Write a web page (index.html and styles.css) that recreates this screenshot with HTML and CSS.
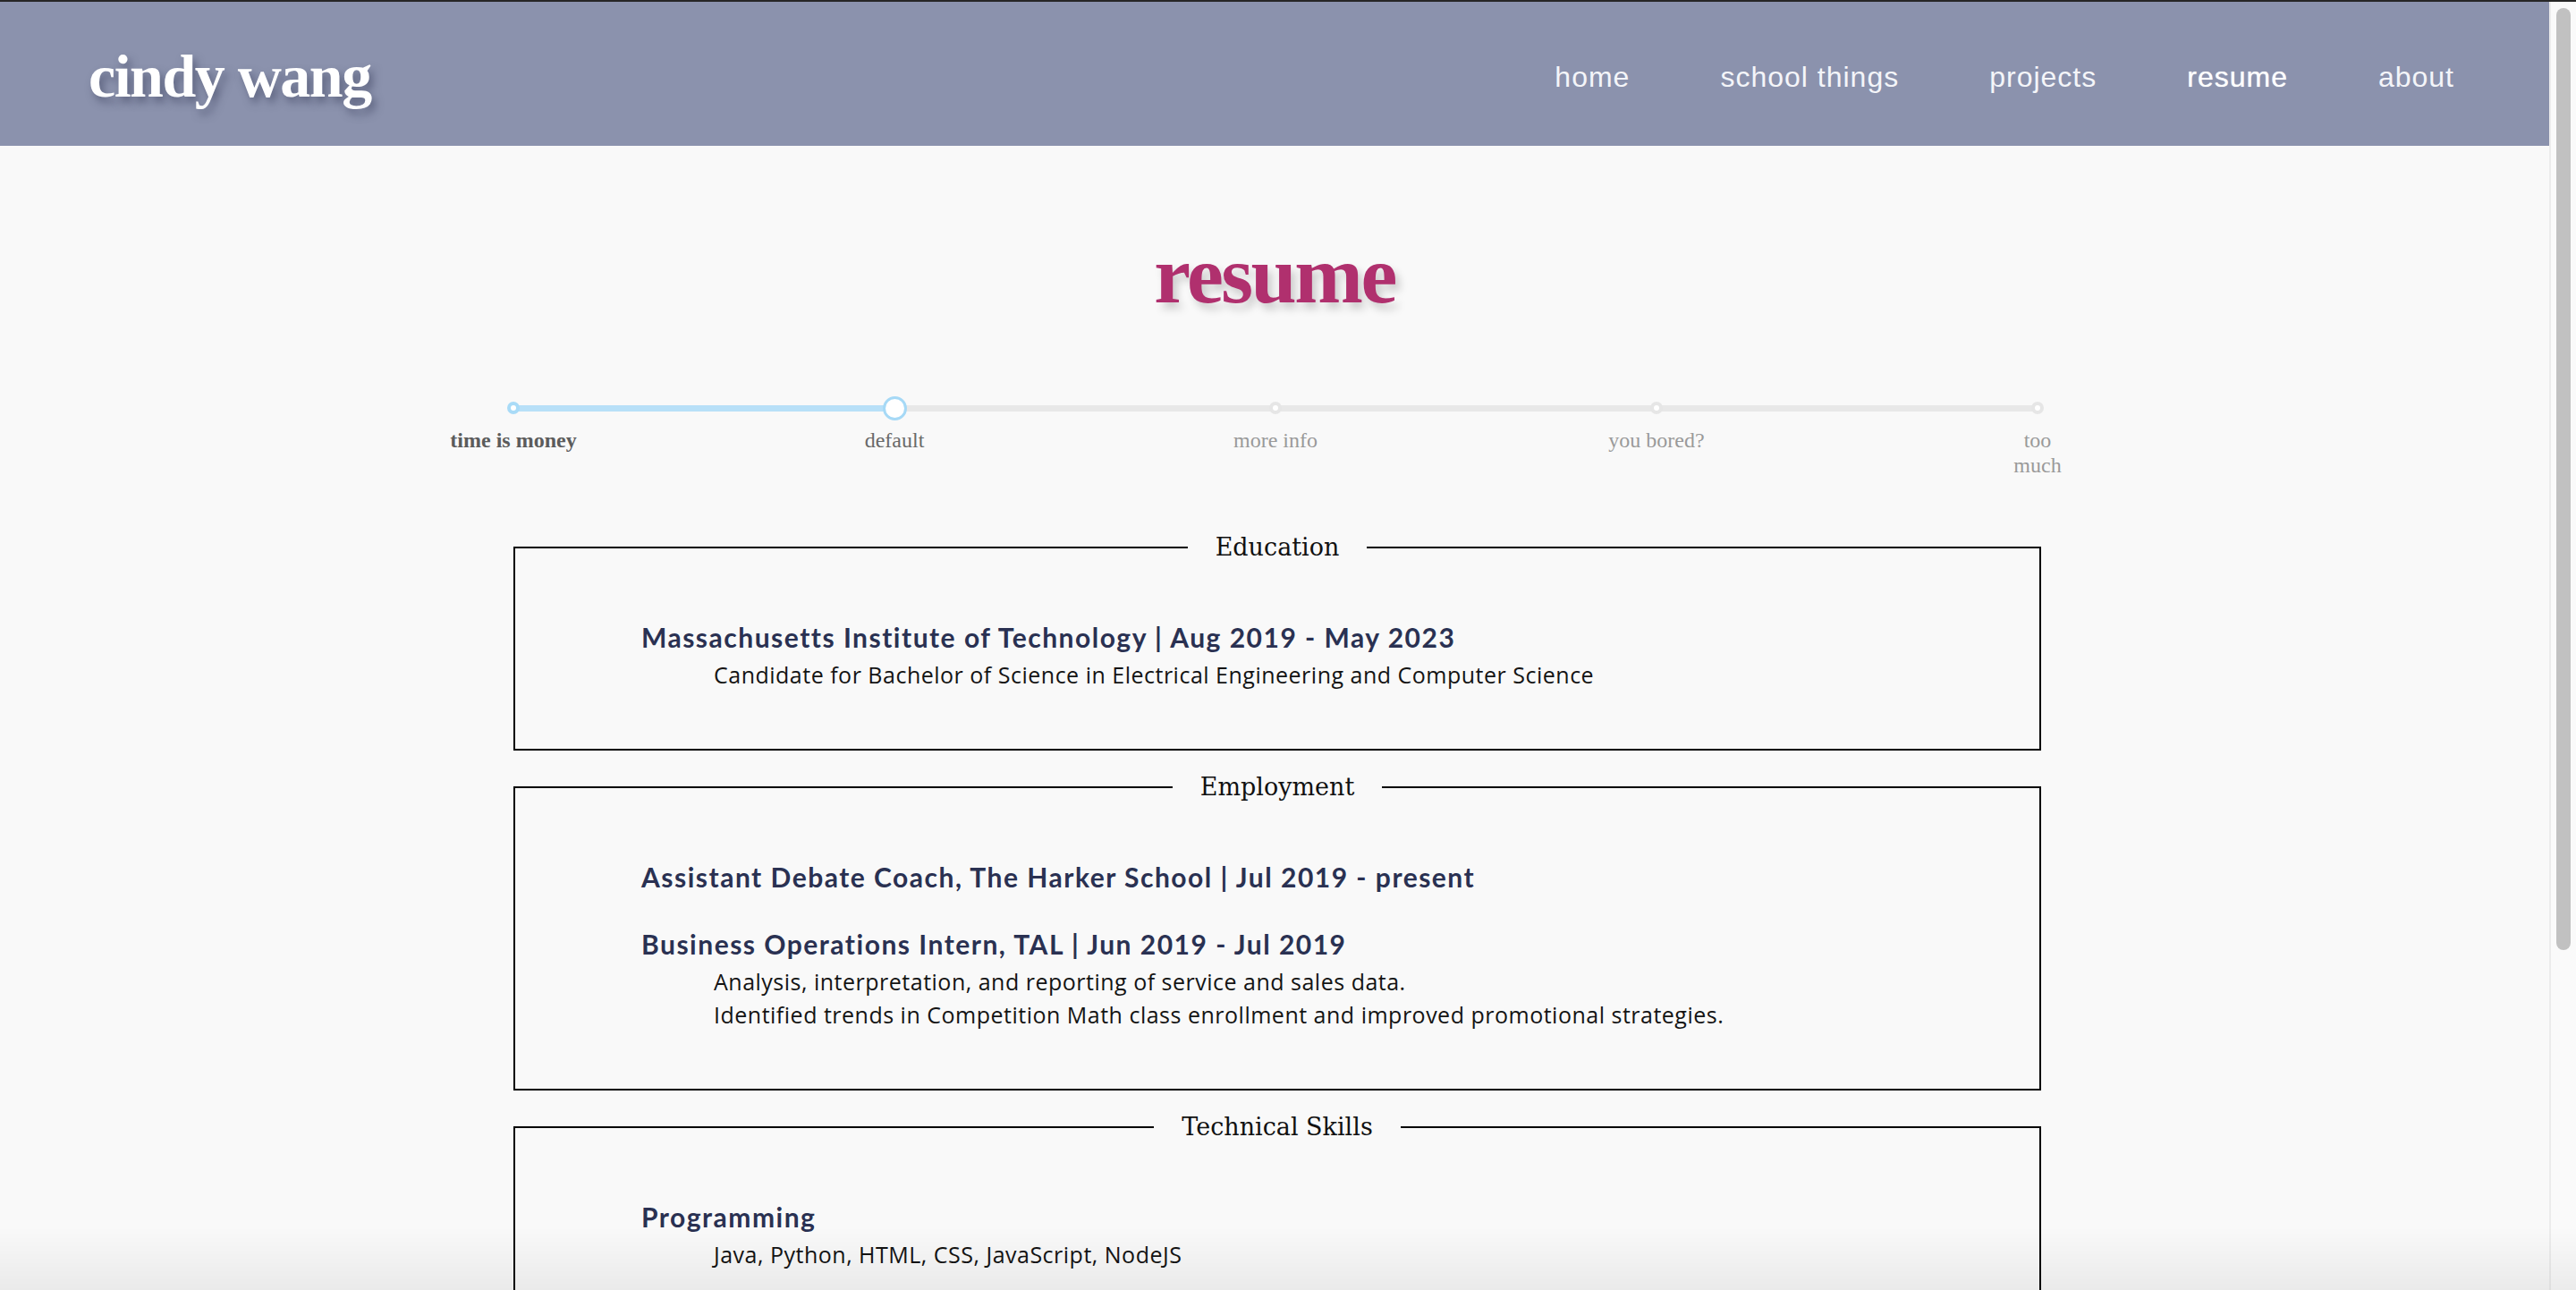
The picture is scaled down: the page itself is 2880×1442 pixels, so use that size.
FILE: index.html
```html
<!DOCTYPE html>
<html lang="en">
<head>
<meta charset="utf-8">
<title>resume | cindy wang</title>
<link rel="stylesheet" href="styles.css">
</head>
<body>
<div class="window">
  <div class="page">
    <header class="topbar">
      <div class="logo">cindy wang</div>
      <nav class="nav">
        <a href="#" class="nav-link">home</a>
        <a href="#" class="nav-link">school things</a>
        <a href="#" class="nav-link">projects</a>
        <a href="#" class="nav-link is-active">resume</a>
        <a href="#" class="nav-link">about</a>
      </nav>
    </header>

    <main class="content">
      <h1 class="page-title">resume</h1>

      <div class="slider">
        <div class="slider-fill" style="width:426px"></div>
        <div class="stop">
          <span class="dot dot-done"></span>
          <span class="stop-label label-strong">time is money</span>
        </div>
        <div class="stop">
          <span class="dot dot-active"></span>
          <span class="stop-label label-current">default</span>
        </div>
        <div class="stop">
          <span class="dot"></span>
          <span class="stop-label">more info</span>
        </div>
        <div class="stop">
          <span class="dot"></span>
          <span class="stop-label">you bored?</span>
        </div>
        <div class="stop">
          <span class="dot"></span>
          <span class="stop-label label-narrow">too much</span>
        </div>
      </div>

      <fieldset class="box">
        <legend class="box-legend">Education</legend>
        <div class="entry">
          <h3 class="entry-title">Massachusetts Institute of Technology | Aug 2019 - May 2023</h3>
          <p class="entry-desc">Candidate for Bachelor of Science in Electrical Engineering and Computer Science</p>
        </div>
      </fieldset>

      <fieldset class="box">
        <legend class="box-legend">Employment</legend>
        <div class="entry">
          <h3 class="entry-title">Assistant Debate Coach, The Harker School | Jul 2019 - present</h3>
        </div>
        <div class="entry">
          <h3 class="entry-title">Business Operations Intern, TAL | Jun 2019 - Jul 2019</h3>
          <p class="entry-desc">Analysis, interpretation, and reporting of service and sales data.<br>Identified trends in Competition Math class enrollment and improved promotional strategies.</p>
        </div>
      </fieldset>

      <fieldset class="box">
        <legend class="box-legend">Technical Skills</legend>
        <div class="entry">
          <h3 class="entry-title">Programming</h3>
          <p class="entry-desc">Java, Python, HTML, CSS, JavaScript, NodeJS</p>
        </div>
      </fieldset>
    </main>
  </div>
  <div class="scrollbar"><div class="scroll-thumb"></div></div>
</div>
<div class="bottom-shade"></div>
</body>
</html>
```
FILE: styles.css
```css
html, body {
  margin: 0;
  padding: 0;
}

body {
  height: 1442px;
  overflow: hidden;
  background: #f9f9f9;
  border-top: 2px solid #262626;
  box-sizing: border-box;
  font-family: "Liberation Sans", Arial, sans-serif;
}

.window {
  display: flex;
  height: 1440px;
}

.page {
  flex: 1;
  min-width: 0;
  background: #f9f9f9;
}

/* ---------- header ---------- */
.topbar {
  height: 161px;
  background: #8b92ad;
  display: flex;
  align-items: center;
  justify-content: space-between;
  padding: 0 106px 0 99px;
}

.logo {
  font-family: "Liberation Serif", "Times New Roman", serif;
  font-weight: 700;
  font-size: 68px;
  line-height: 68px;
  letter-spacing: -1.5px;
  color: #ffffff;
  padding-top: 4px;
  text-shadow: 4px 6px 10px rgba(55, 60, 90, 0.55);
}

.nav {
  display: flex;
  gap: 101px;
  padding-top: 7px;
}

.nav-link {
  font-family: "Liberation Sans", Arial, sans-serif;
  font-size: 32px;
  line-height: 32px;
  letter-spacing: 1px;
  color: #f4f5f9;
  text-decoration: none;
}

.nav-link.is-active {
  color: #ffffff;
  text-shadow: 0 0 1px rgba(255, 255, 255, 0.8);
}

/* ---------- main ---------- */
.content {
  padding-bottom: 40px;
}

.page-title {
  margin: 98px 0 0;
  text-align: center;
  font-family: "Liberation Serif", "Times New Roman", serif;
  font-weight: 700;
  font-size: 92px;
  line-height: 92px;
  letter-spacing: -2.5px;
  color: #b0306e;
  text-shadow: 5px 7px 10px rgba(0, 0, 0, 0.18);
}

/* ---------- slider ---------- */
.slider {
  position: relative;
  display: grid;
  grid-template-columns: repeat(5, 426px);
  width: 2130px;
  margin: 89px 0 0 calc(50% - 1064px);
}

.slider::before {
  content: "";
  position: absolute;
  left: 213px;
  right: 213px;
  top: 10.5px;
  height: 7px;
  background: #e8e8e8;
}

.slider-fill {
  position: absolute;
  left: 213px;
  top: 10.5px;
  height: 7px;
  background: #b8e0f8;
}

.stop {
  position: relative;
  z-index: 1;
  display: flex;
  flex-direction: column;
  align-items: center;
}

.dot {
  display: flex;
  align-items: center;
  justify-content: center;
  height: 28px;
}

.dot::before {
  content: "";
  display: block;
  width: 14px;
  height: 14px;
  box-sizing: border-box;
  border-radius: 50%;
  border: 4px solid #e6e6e6;
  background: #ffffff;
}

.dot-done::before {
  border-color: #a9dbf7;
}

.dot-active::before {
  width: 27px;
  height: 27px;
  border: 3px solid #a6d9f6;
}

.stop-label {
  margin-top: 8px;
  font-family: "Liberation Serif", "Times New Roman", serif;
  font-size: 24px;
  line-height: 28px;
  color: #9a9a9a;
  text-align: center;
}

.label-strong {
  font-weight: 700;
  color: #5c5c5c;
}

.label-current {
  color: #6a6a6a;
}

.label-narrow {
  max-width: 60px;
}

/* ---------- boxes ---------- */
.box {
  width: 1708px;
  box-sizing: border-box;
  min-inline-size: 0;
  margin: 0 0 21px calc(50% - 851px);
  border: 2px solid #000000;
  padding: 60px 141px 64px 141px;
}

.slider + .box {
  margin-top: 58px;
}

.box-legend {
  margin: 0 auto;
  padding: 0 31px;
  font-family: "DejaVu Serif", "Liberation Serif", serif;
  font-size: 27px;
  line-height: 40px;
  color: #111111;
}

.entry + .entry {
  margin-top: 35px;
}

.entry-title {
  margin: 0;
  font-family: Lato, "Open Sans", sans-serif;
  font-weight: 700;
  font-size: 30px;
  line-height: 40px;
  letter-spacing: 1.5px;
  color: #2a3152;
}

.entry-desc {
  margin: 4px 0 0 81px;
  font-family: "Open Sans", "Noto Sans", sans-serif;
  font-size: 25px;
  line-height: 37px;
  letter-spacing: 0.5px;
  color: #141414;
}

/* ---------- fake scrollbar ---------- */
.scrollbar {
  width: 28px;
  border-left: 2px solid #ececec;
  background: #fafafa;
  padding-top: 7px;
}

.scroll-thumb {
  width: 16px;
  height: 1053px;
  margin-left: 6px;
  border-radius: 8px;
  background: #c1c1c1;
}

.bottom-shade {
  position: fixed;
  left: 0;
  right: 0;
  bottom: 0;
  height: 70px;
  background: linear-gradient(to bottom, rgba(0, 0, 0, 0), rgba(0, 0, 0, 0.06));
  pointer-events: none;
}
```
